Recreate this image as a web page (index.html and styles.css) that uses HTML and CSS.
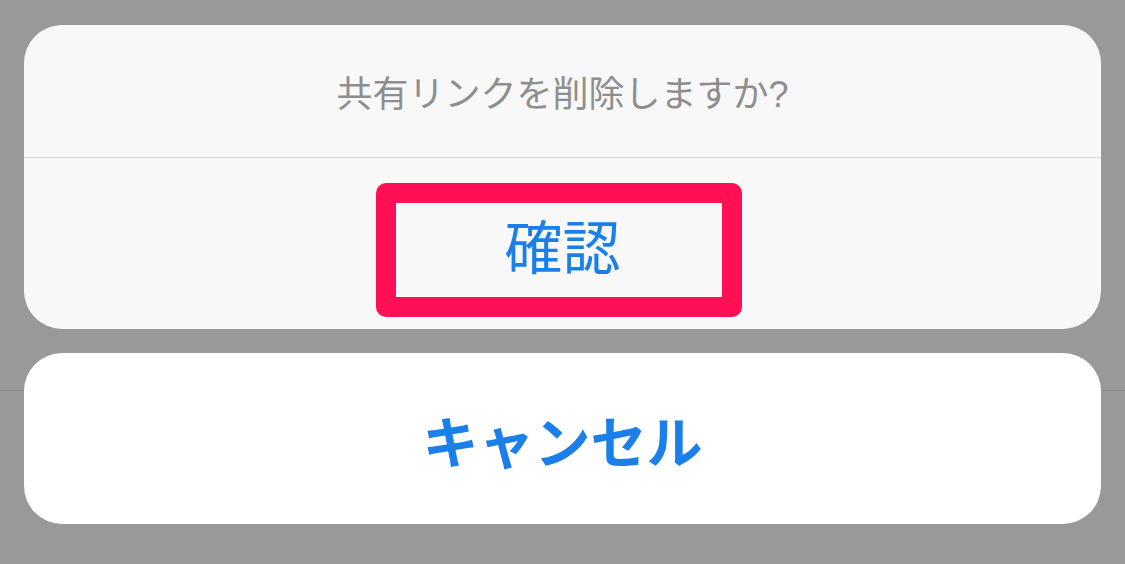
FILE: index.html
```html
<!DOCTYPE html>
<html lang="ja">
<head>
    <meta charset="UTF-8">
    <meta name="viewport" content="width=device-width, initial-scale=1.0">
    <title>共有リンクを削除</title>
    <link rel="stylesheet" href="styles.css">
</head>
<body>
    <!-- Action sheet -->
    <div class="sheet">
        <div class="sheet-group">
            <div class="sheet-title">共有リンクを削除しますか?</div>
            <div class="sheet-action">
                <span class="action-label">確認</span>
                <span class="highlight"></span>
            </div>
        </div>

        <div class="sheet-cancel">キャンセル</div>
    </div>
</body>
</html>
```

FILE: styles.css
```css
/* General Styles */
html, body {
    height: 100%;
    margin: 0;
}

body {
    font-family: "Noto Sans CJK JP", "Noto Sans", sans-serif;
    background-color: #999999;
    /* faint divider of the page underneath */
    background-image: linear-gradient(to bottom, transparent 390px, #8c8c8c 390px, #8c8c8c 391px, transparent 391px);
    padding: 25px 24px 0;
    box-sizing: border-box;
}

/* Action Sheet */
.sheet {
    display: flex;
    flex-direction: column;
    gap: 24px;
}

.sheet-group {
    background-color: #f8f8f8;
    border-radius: 38px;
    overflow: hidden;
}

.sheet-title {
    height: 132px;
    display: flex;
    align-items: center;
    justify-content: center;
    border-bottom: 1px solid #d9d9d9;
    color: #8e8e8e;
    font-family: "Liberation Sans", "Noto Sans CJK JP", sans-serif;
    font-size: 36px;
}

.sheet-action {
    position: relative;
    height: 171px;
    display: flex;
    align-items: center;
    justify-content: center;
}

.action-label {
    color: #1a7fe8;
    font-size: 58px;
}

/* annotation box drawn over the button */
.highlight {
    position: absolute;
    left: 352px;
    top: 25px;
    width: 366px;
    height: 134px;
    box-sizing: border-box;
    border: 20px solid #ff1055;
    border-radius: 10px;
}

.sheet-cancel {
    height: 171px;
    display: flex;
    align-items: center;
    justify-content: center;
    background-color: #ffffff;
    border-radius: 38px;
    color: #1a7fe8;
    font-size: 56px;
    font-weight: bold;
}
```
